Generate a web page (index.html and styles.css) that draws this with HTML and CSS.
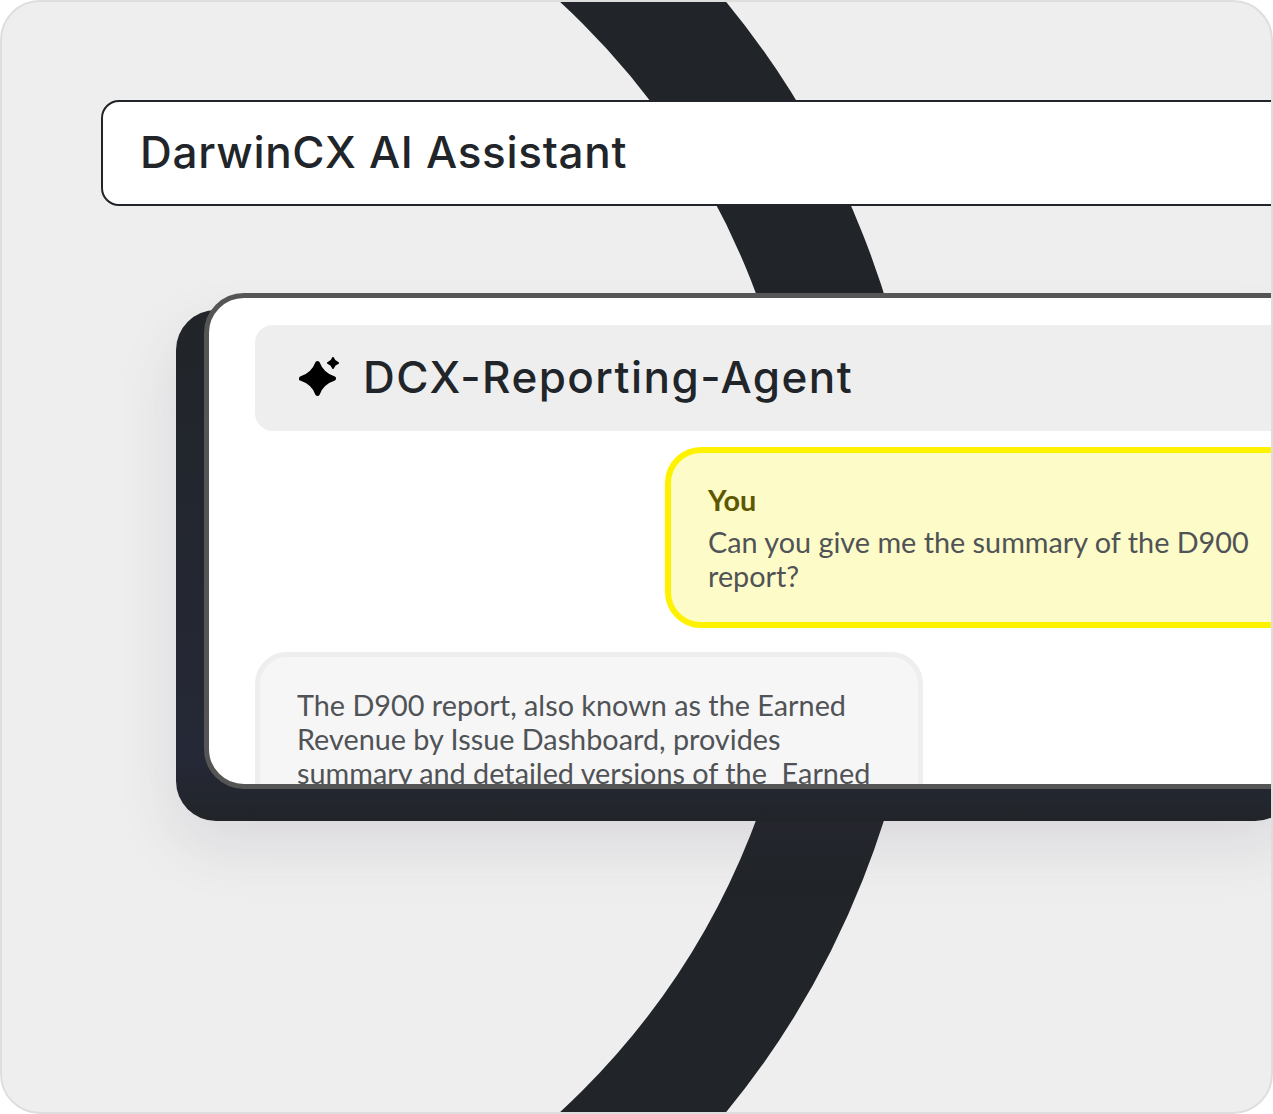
FILE: index.html
```html
<!DOCTYPE html>
<html lang="en">
<head>
    <meta charset="UTF-8">
    <meta name="viewport" content="width=device-width, initial-scale=1.0">
    <title>DarwinCX AI Assistant</title>
    <link rel="stylesheet" href="styles.css">
</head>
<body>
    <div class="frame">
        <!-- big ring behind everything -->
        <svg class="ring" width="1269" height="1110" viewBox="0 0 1269 1110" aria-hidden="true">
            <circle cx="47" cy="555" r="815" fill="none" stroke="#212529" stroke-width="121"/>
        </svg>

        <div class="title-bar">DarwinCX AI Assistant</div>

        <div class="backing">
            <div class="window">
                <div class="agent-bar">
                    <svg class="spark" width="42" height="42" viewBox="0 0 42 42" aria-hidden="true">
                        <path d="M19.5 6.5 Q23.5 17.5 35.5 21.5 Q23.5 25.5 19.5 36.5 Q15.5 25.5 3.5 21.5 Q15.5 17.5 19.5 6.5 Z" fill="#000" stroke="#000" stroke-width="5" stroke-linejoin="round"/>
                        <path d="M35 1 Q36.2 4.8 40 6 Q36.2 7.2 35 11 Q33.8 7.2 30 6 Q33.8 4.8 35 1 Z" fill="#000" stroke="#000" stroke-width="2" stroke-linejoin="round"/>
                    </svg>
                    <span class="agent-name">DCX-Reporting-Agent</span>
                </div>

                <div class="bubble bubble-user">
                    <div class="bubble-author">You</div>
                    <p>Can you give me the summary of the D900 report?</p>
                </div>

                <div class="bubble bubble-agent">
                    <p>The D900 report, also known as the Earned Revenue by Issue Dashboard, provides summary and detailed versions of the &nbsp;Earned</p>
                </div>
            </div>
        </div>
    </div>
</body>
</html>
```

FILE: styles.css
```css
* {
    box-sizing: border-box;
}
body {
    margin: 0;
    background-color: #fff;
    font-family: "Lato", sans-serif;
}
p {
    margin: 0;
}
.frame {
    position: relative;
    width: 1273px;
    height: 1114px;
    padding-top: 98px;
    padding-left: 99px;
    background-color: #eeeeee;
    border: 2px solid #dedede;
    border-radius: 40px;
    overflow: hidden;
}
.ring {
    position: absolute;
    top: 0;
    left: 0;
}
.title-bar {
    position: relative;
    display: flex;
    align-items: center;
    width: 1300px;
    height: 106px;
    padding-left: 37px;
    padding-bottom: 2px;
    background-color: #fff;
    border: 2px solid #212529;
    border-radius: 18px;
    color: #212529;
    font-family: "Inter", sans-serif;
    font-size: 44px;
    font-weight: 500;
    letter-spacing: 0.7px;
}
.backing {
    position: relative;
    display: flow-root;
    width: 1119px;
    margin-top: 104px;
    margin-left: 75px;
    padding-left: 28px;
    padding-bottom: 32px;
    background: linear-gradient(#212529, #252836 88%, #212529);
    border-radius: 40px;
    box-shadow: 0 24px 60px rgba(70, 60, 90, 0.12);
}
.window {
    width: 1120px;
    height: 496px;
    margin-top: -17px;
    padding: 27px 0 0 46px;
    background-color: #fff;
    border: 5px solid #555555;
    border-radius: 40px;
    overflow: hidden;
}
.agent-bar {
    display: flex;
    align-items: center;
    gap: 23px;
    height: 106px;
    padding-left: 43px;
    background-color: #eeeeee;
    border-radius: 18px;
}
.agent-name {
    margin-bottom: 2px;
    color: #212529;
    font-family: "Inter", sans-serif;
    font-size: 44px;
    font-weight: 500;
    letter-spacing: 1.45px;
}
.bubble {
    font-size: 28.8px;
    line-height: 34px;
    color: #505356;
}
.bubble-user {
    width: 680px;
    height: 181px;
    margin-top: 16px;
    margin-left: 410px;
    padding: 30px 37px 0;
    background-color: #fdfbc8;
    border: 6px solid #fff200;
    border-radius: 36px;
}
.bubble-author {
    margin-bottom: 8px;
    color: #5c5700;
    font-weight: 700;
}
.bubble-agent {
    width: 668px;
    margin-top: 24px;
    padding: 31px 37px;
    background-color: #f6f6f6;
    border: 5px solid #eeeeee;
    border-radius: 32px;
}
```
